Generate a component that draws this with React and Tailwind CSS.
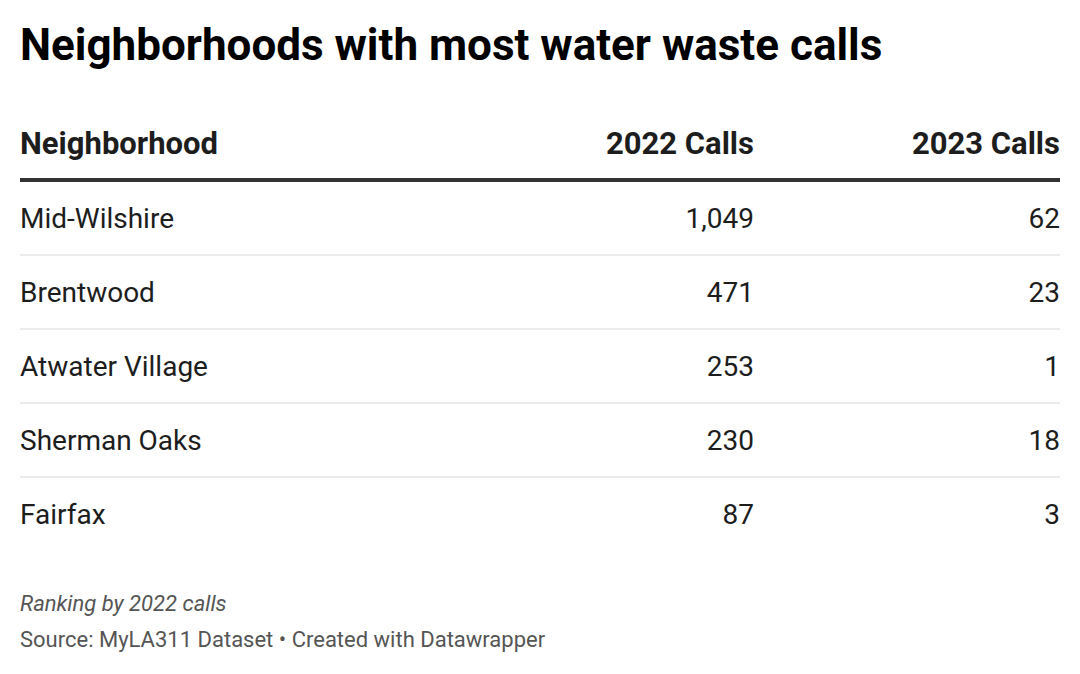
const rows = [
  { name: 'Mid-Wilshire', a: '1,049', b: '62' },
  { name: 'Brentwood', a: '471', b: '23' },
  { name: 'Atwater Village', a: '253', b: '1' },
  { name: 'Sherman Oaks', a: '230', b: '18' },
  { name: 'Fairfax', a: '87', b: '3' },
];

export default function App() {
  return (
    <div className="w-[1080px] h-[674px] bg-white px-5 pt-[18px] font-['Roboto',sans-serif] text-[#1d1d1d]">
      <h1 className="text-[44px] leading-[54px] font-bold text-black">
        Neighborhoods with most water waste calls
      </h1>

      <div className="mt-[38px]">
        <div className="flex items-center h-[72px] border-b-4 border-[#333333] text-[31px] font-bold">
          <div className="flex-1">Neighborhood</div>
          <div className="w-[200px] text-right">2022 Calls</div>
          <div className="w-[306px] text-right">2023 Calls</div>
        </div>
        {rows.map((r, i) => (
          <div
            key={r.name}
            className={`flex items-center h-[74px] pt-[2px] border-b-2 text-[28px] ${i < rows.length - 1 ? 'border-[#ececec]' : 'border-transparent'}`}
          >
            <div className="flex-1">{r.name}</div>
            <div className="w-[200px] text-right">{r.a}</div>
            <div className="w-[306px] text-right">{r.b}</div>
          </div>
        ))}
      </div>

      <div className="mt-[34px] text-[22px] text-[#555555]">
        <p className="italic leading-[36px]">Ranking by 2022 calls</p>
        <p className="leading-[36px]">Source: MyLA311 Dataset • Created with Datawrapper</p>
      </div>
    </div>
  );
}
